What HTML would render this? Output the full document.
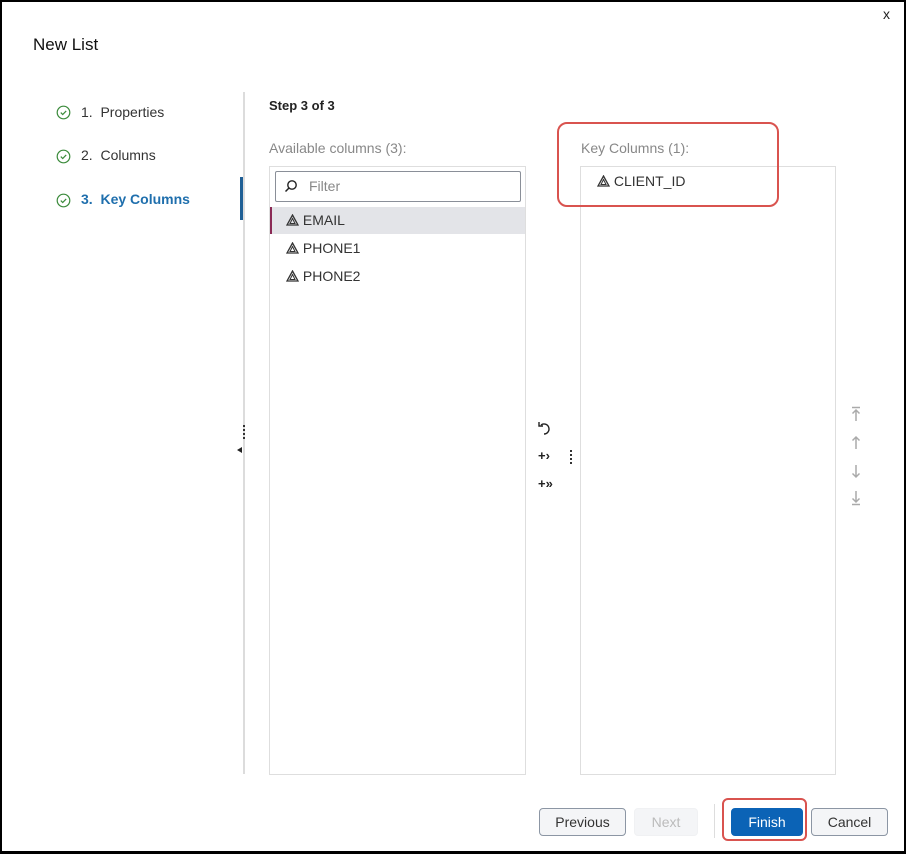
<!DOCTYPE html>
<html><head><style>
*{box-sizing:border-box;margin:0;padding:0}
body{width:906px;height:854px;overflow:hidden;background:#fff;font-family:"Liberation Sans",sans-serif;color:#333;position:relative}
.frame{position:absolute;left:0;top:0;width:906px;height:854px;border:2px solid #000;border-bottom-width:3px}
.a{position:absolute;white-space:nowrap}
.step{font-size:14px;color:#333}
.ico{position:absolute}
.row{position:absolute;font-size:14px;color:#333;height:27px;line-height:27px}
.btn{position:absolute;top:808px;height:28px;border:1px solid #8c96a4;border-radius:4px;background:#f4f5f7;font-size:14px;text-align:center;line-height:26px;color:#333}
</style></head><body>
<div class="frame"></div>
<div class="a" style="left:883px;top:6px;font-size:14px;color:#222">x</div>
<div class="a" style="left:33px;top:35px;font-size:17px;color:#111">New List</div>

<svg class="ico" style="left:56px;top:105px" width="15" height="15" viewBox="0 0 15 15"><circle cx="7.5" cy="7.5" r="6.3" fill="none" stroke="#3a8a3a" stroke-width="1.2"/><path d="M4.8 7.6l1.9 1.9 3.5-3.6" fill="none" stroke="#3a8a3a" stroke-width="1.2"/></svg>
<div class="a step" style="left:81px;top:104px">1.&nbsp; Properties</div>
<svg class="ico" style="left:56px;top:149px" width="15" height="15" viewBox="0 0 15 15"><circle cx="7.5" cy="7.5" r="6.3" fill="none" stroke="#3a8a3a" stroke-width="1.2"/><path d="M4.8 7.6l1.9 1.9 3.5-3.6" fill="none" stroke="#3a8a3a" stroke-width="1.2"/></svg>
<div class="a step" style="left:81px;top:147px">2.&nbsp; Columns</div>
<svg class="ico" style="left:56px;top:193px" width="15" height="15" viewBox="0 0 15 15"><circle cx="7.5" cy="7.5" r="6.3" fill="none" stroke="#3a8a3a" stroke-width="1.2"/><path d="M4.8 7.6l1.9 1.9 3.5-3.6" fill="none" stroke="#3a8a3a" stroke-width="1.2"/></svg>
<div class="a step" style="left:81px;top:191px;color:#1f6fad;font-weight:bold">3.&nbsp; Key Columns</div>

<div class="a" style="left:243px;top:92px;width:2px;height:682px;background:#dcdcdc"></div>
<div class="a" style="left:240px;top:177px;width:3px;height:43px;background:#1f5f95"></div>
<div class="a" style="left:243px;top:425px;width:2px;height:14px;background:repeating-linear-gradient(#333 0 2px,transparent 2px 4px)"></div>
<div class="a" style="left:237px;top:447px;width:0;height:0;border-top:3px solid transparent;border-bottom:3px solid transparent;border-right:5px solid #222"></div>

<div class="a" style="left:269px;top:98px;font-size:13px;font-weight:bold;color:#222">Step 3 of 3</div>
<div class="a" style="left:269px;top:140px;font-size:14px;color:#888">Available columns (3):</div>
<div class="a" style="left:581px;top:140px;font-size:14px;color:#888">Key Columns (1):</div>

<div class="a" style="left:269px;top:166px;width:257px;height:609px;border:1px solid #dedede"></div>
<div class="a" style="left:275px;top:171px;width:246px;height:31px;border:1px solid #8a8f98;border-radius:2px"></div>
<svg class="ico" style="left:284px;top:179px" width="14" height="14" viewBox="0 0 14 14"><circle cx="8" cy="6" r="4.2" fill="none" stroke="#222" stroke-width="1.4"/><path d="M5 9L1.5 12.5" stroke="#222" stroke-width="1.5"/></svg>
<div class="a" style="left:309px;top:178px;font-size:14px;color:#888">Filter</div>
<div class="a" style="left:270px;top:207px;width:255px;height:27px;background:#e3e4e8;border-left:2px solid #8a2a55"></div>

<div class="row" style="left:286px;top:207px"><svg width="13" height="12" viewBox="0 0 13 12" style="vertical-align:-1px"><path d="M6.5 1L12 11H1z" fill="none" stroke="#333" stroke-width="1.3"/><path d="M6.5 4.5L9 9.5H4z" fill="none" stroke="#333" stroke-width="1"/></svg> EMAIL</div>
<div class="row" style="left:286px;top:235px"><svg width="13" height="12" viewBox="0 0 13 12" style="vertical-align:-1px"><path d="M6.5 1L12 11H1z" fill="none" stroke="#333" stroke-width="1.3"/><path d="M6.5 4.5L9 9.5H4z" fill="none" stroke="#333" stroke-width="1"/></svg> PHONE1</div>
<div class="row" style="left:286px;top:263px"><svg width="13" height="12" viewBox="0 0 13 12" style="vertical-align:-1px"><path d="M6.5 1L12 11H1z" fill="none" stroke="#333" stroke-width="1.3"/><path d="M6.5 4.5L9 9.5H4z" fill="none" stroke="#333" stroke-width="1"/></svg> PHONE2</div>

<div class="a" style="left:580px;top:166px;width:256px;height:609px;border:1px solid #dedede"></div>
<div class="row" style="left:597px;top:168px"><svg width="13" height="12" viewBox="0 0 13 12" style="vertical-align:-1px"><path d="M6.5 1L12 11H1z" fill="none" stroke="#333" stroke-width="1.3"/><path d="M6.5 4.5L9 9.5H4z" fill="none" stroke="#333" stroke-width="1"/></svg> CLIENT_ID</div>
<div class="a" style="left:557px;top:122px;width:222px;height:85px;border:2px solid #d9534f;border-radius:10px"></div>

<svg class="ico" style="left:537px;top:420px" width="16" height="16" viewBox="0 0 16 16"><path d="M4 5A5 5 0 1 1 7 14" fill="none" stroke="#222" stroke-width="1.4"/><path d="M2 2v4h4" fill="none" stroke="#222" stroke-width="1.4"/></svg>
<div class="a" style="left:538px;top:448px;font-size:13px;font-weight:bold;color:#222">+›</div>
<div class="a" style="left:538px;top:476px;font-size:13px;font-weight:bold;color:#222">+»</div>
<div class="a" style="left:570px;top:450px;width:2px;height:14px;background:repeating-linear-gradient(#333 0 2px,transparent 2px 4px)"></div>

<svg class="ico" style="left:850px;top:406px" width="12" height="16" viewBox="0 0 12 16"><path d="M2 1.5h8M6 4v11M2.5 7.5L6 4l3.5 3.5" fill="none" stroke="#aaa" stroke-width="1.5"/></svg>
<svg class="ico" style="left:850px;top:435px" width="12" height="16" viewBox="0 0 12 16"><path d="M6 2v12M2.5 5.5L6 2l3.5 3.5" fill="none" stroke="#aaa" stroke-width="1.5"/></svg>
<svg class="ico" style="left:850px;top:463px" width="12" height="16" viewBox="0 0 12 16"><path d="M6 2v12M2.5 10.5L6 14l3.5-3.5" fill="none" stroke="#aaa" stroke-width="1.5"/></svg>
<svg class="ico" style="left:850px;top:490px" width="12" height="16" viewBox="0 0 12 16"><path d="M2 14.5h8M6 1v11M2.5 8.5L6 12l3.5-3.5" fill="none" stroke="#aaa" stroke-width="1.5"/></svg>

<div class="btn" style="left:539px;width:87px">Previous</div>
<div class="btn" style="left:634px;width:64px;border-color:#f0f1f3;color:#bbb">Next</div>
<div class="a" style="left:714px;top:804px;width:1px;height:34px;background:#ddd"></div>
<div class="a" style="left:722px;top:798px;width:85px;height:43px;border:2px solid #d9534f;border-radius:6px"></div>
<div class="btn" style="left:731px;width:72px;background:#0b63b6;border-color:#0b63b6;color:#fff">Finish</div>
<div class="btn" style="left:811px;width:77px">Cancel</div>
</body></html>
